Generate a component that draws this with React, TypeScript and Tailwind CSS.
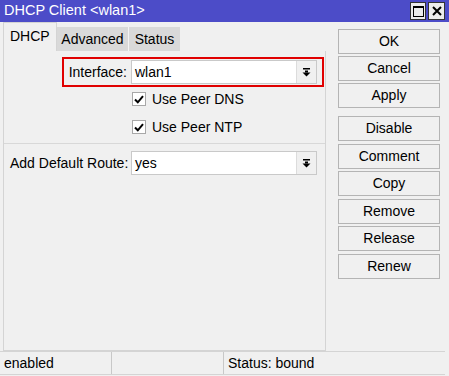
import React from "react";

const font = { fontFamily: '"Liberation Sans", Arial, sans-serif' };

function DropArrow() {
  return (
    <svg width="9" height="9" viewBox="0 0 9 9">
      <rect x="1" y="0" width="7" height="1.5" fill="#000" />
      <rect x="3" y="2.5" width="3" height="2" fill="#000" />
      <polygon points="0.5,4.5 8.5,4.5 4.5,8.5" fill="#000" />
    </svg>
  );
}

function ComboBox({ value }: { value: string }) {
  return (
    <div className="flex h-[24px] w-[186px] border border-[#c9c9c9] bg-white">
      <div className="flex flex-1 items-center pl-[3px] text-[14px] text-black">{value}</div>
      <div className="flex w-[20px] items-center justify-center border-l border-[#dcdcdc] bg-[#f0f0f0]">
        <DropArrow />
      </div>
    </div>
  );
}

function CheckRow({ label }: { label: string }) {
  return (
    <div className="flex h-[28px] items-center pl-[128px]">
      <div className="flex h-[14px] w-[14px] items-center justify-center border border-[#a8a8a8] bg-white">
        <svg width="10" height="9" viewBox="0 0 10 9">
          <path d="M1 4.5 L3.8 7.3 L9 1.2" stroke="#000" strokeWidth="2" fill="none" />
        </svg>
      </div>
      <span className="ml-[6px] text-[14px] text-black">{label}</span>
    </div>
  );
}

const groupA = ["OK", "Cancel", "Apply"];
const groupB = ["Disable", "Comment", "Copy", "Remove", "Release", "Renew"];

function SideButton({ label }: { label: string }) {
  return (
    <div className="flex h-[25px] w-[102px] items-center justify-center border border-[#b4b4b4] bg-[#f0f0f0] text-[14px] text-black">
      {label}
    </div>
  );
}

export default function App() {
  return (
    <div className="flex h-[376px] w-[449px] flex-col bg-[#f0f0f0]" style={font}>
      {/* Title bar */}
      <div className="flex h-[22px] items-center justify-between bg-[#4c4cc8] pl-[4px] pr-[4px]">
        <span className="text-[14.5px] text-white">DHCP Client &lt;wlan1&gt;</span>
        <div className="flex gap-[2px]">
          <div className="flex h-[18px] w-[16px] items-center justify-center border border-[#333] bg-[#ececec]">
            <div className="h-[11px] w-[11px] border border-black border-t-2" />
          </div>
          <div className="flex h-[18px] w-[17px] items-center justify-center border border-[#333] bg-[#ececec]">
            <svg width="10" height="10" viewBox="0 0 10 10">
              <path d="M1 1 L9 9 M9 1 L1 9" stroke="#000" strokeWidth="2" />
            </svg>
          </div>
        </div>
      </div>

      <div className="flex flex-1">
        {/* Left: tabs + content */}
        <div className="flex w-[326px] flex-col pl-[3px]">
          <div className="flex h-[29px] items-end">
            <div className="flex h-[29px] w-[54px] items-center border-l border-r border-t border-[#d4d4d4] bg-[#f0f0f0] pb-[2px] pl-[6px] text-[14px] text-black">
              DHCP
            </div>
            <div className="flex h-[24px] w-[72px] items-center justify-center border-r border-[#f4f4f4] bg-[#d9d9d9] text-[14px] text-black">
              Advanced
            </div>
            <div className="flex h-[24px] w-[51px] items-center justify-center bg-[#d9d9d9] text-[14px] text-black">
              Status
            </div>
          </div>
          <div className="flex flex-1 flex-col border-b border-l border-r border-[#d4d4d4] pt-[6px]">
            <div className="ml-[58px] flex h-[30px] w-[262px] items-center border-2 border-[#e00000]">
              <span className="w-[67px] pr-[4px] text-right text-[14px] text-black">Interface:</span>
              <ComboBox value="wlan1" />
            </div>
            <div className="-mt-[2px]">
              <CheckRow label="Use Peer DNS" />
              <CheckRow label="Use Peer NTP" />
            </div>
            <div className="mt-[2px] h-px w-[321px] bg-[#d8d8d8]" />
            <div className="mt-[7px] flex items-center pl-[6px]">
              <span className="w-[121px] text-[14px] text-black">Add Default Route:</span>
              <ComboBox value="yes" />
            </div>
          </div>
        </div>

        {/* Right: buttons */}
        <div className="flex flex-col pl-[12px] pt-[7px]">
          <div className="flex flex-col gap-[2px]">
            {groupA.map((b) => (
              <SideButton key={b} label={b} />
            ))}
          </div>
          <div className="mt-[8px] flex flex-col gap-[2.6px]">
            {groupB.map((b) => (
              <SideButton key={b} label={b} />
            ))}
          </div>
        </div>
      </div>

      {/* Status bar */}
      <div className="mr-[4px] flex h-[24px] border-b border-t border-[#d4d4d4] text-[14px] text-black">
        <div className="flex w-[112px] items-center border-r border-[#c8c8c8] pl-[4px]">enabled</div>
        <div className="w-[112px] border-r border-[#c8c8c8]" />
        <div className="flex flex-1 items-center pl-[4px]">Status: bound</div>
      </div>
      <div className="h-[1px]" />
    </div>
  );
}
